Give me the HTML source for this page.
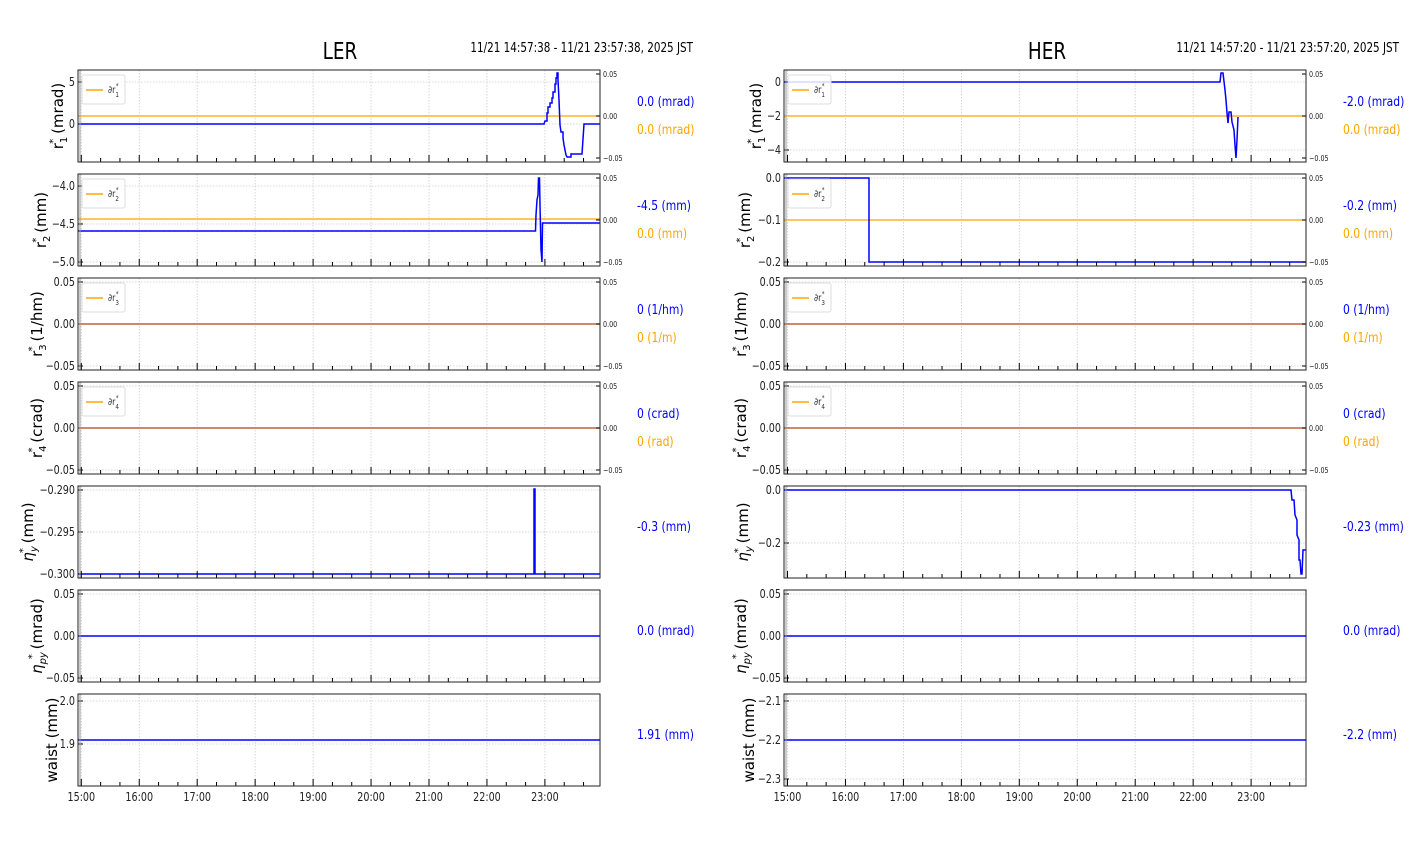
<!DOCTYPE html>
<html><head><meta charset="utf-8"><style>
html,body{margin:0;padding:0;background:#fff;width:1412px;height:864px;overflow:hidden}
svg{display:block}
text{font-family:"DejaVu Sans","Liberation Sans",sans-serif}
</style></head><body>
<svg id="s" width="1412" height="864" xmlns="http://www.w3.org/2000/svg"></svg>
<script>
const S=document.getElementById('s');let h='';
const T=[[70,162],[174,266],[278,370],[382,474],[486,578],[590,682],[694,786]];
const SX=0.8;
function line(x1,y1,x2,y2,c,w,extra){h+=`<line x1="${x1}" y1="${y1}" x2="${x2}" y2="${y2}" stroke="${c}" stroke-width="${w}" ${extra||''}/>`;}
function txt(x,y,s,sz,c,anchor,extra){h+=`<text transform="translate(${x},${y}) scale(${SX},1)" font-size="${sz}" fill="${c||'#000'}" text-anchor="${anchor||'start'}" ${extra||''}>${s}</text>`;}
function pl(pts,c,w){h+=`<polyline points="${pts}" fill="none" stroke="${c}" stroke-width="${w||1.5}" stroke-linejoin="miter"/>`;}
const sides=[
 {x0:78,x1:600,h0:81.3,vx:637,ylx:[57,40,36,36,27,36,51],title:'LER',tx:340,date:'11/21 14:57:38 - 11/21 23:57:38, 2025 JST',dx:693,
  yt:[[[82,'5'],[124,'0']],[[186,'−4.0'],[224,'−4.5'],[262,'−5.0']],[[282,'0.05'],[324,'0.00'],[366,'−0.05']],[[386,'0.05'],[428,'0.00'],[470,'−0.05']],[[490,'−0.290'],[532,'−0.295'],[574,'−0.300']],[[594,'0.05'],[636,'0.00'],[678,'−0.05']],[[701,'2.0'],[744,'1.9']]],
  vals:[['0.0 (mrad)','0.0 (mrad)'],['-4.5 (mm)','0.0 (mm)'],['0 (1/hm)','0 (1/m)'],['0 (crad)','0 (rad)'],['-0.3 (mm)'],['0.0 (mrad)'],['1.91 (mm)']],
  orange:[116,219,324,428],
  blue:['78,124 544,124 545,121 547,121 547,113 548,113 548,107 550,107 550,103 552,103 552,98 553,98 553,92 555,92 555,84 556,84 556,78 557,78 557,73 558,73 558,80 559,100 560,125 561,132 563,132 563,138 564,145 565,150 566,155 567,157 571,157 571,154 582,154 584,124 600,124',
   '78,231 535.5,231 536,215 537,200 538,195 538.5,178 539.5,178 540,205 541,250 542,262 542.5,223 600,223',
   '78,324 600,324','78,428 600,428','78,574 534,574 534,489 535,489 535,574 600,574','78,636 600,636','78,740 600,740']},
 {x0:784,x1:1306,h0:787.5,vx:1343,ylx:[755,744,740,740,742,740,748],title:'HER',tx:1047,date:'11/21 14:57:20 - 11/21 23:57:20, 2025 JST',dx:1399,
  yt:[[[82,'0'],[116,'−2'],[150,'−4']],[[178,'0.0'],[220,'−0.1'],[262,'−0.2']],[[282,'0.05'],[324,'0.00'],[366,'−0.05']],[[386,'0.05'],[428,'0.00'],[470,'−0.05']],[[490,'0.0'],[543,'−0.2']],[[594,'0.05'],[636,'0.00'],[678,'−0.05']],[[701,'−2.1'],[740,'−2.2'],[779,'−2.3']]],
  vals:[['-2.0 (mrad)','0.0 (mrad)'],['-0.2 (mm)','0.0 (mm)'],['0 (1/hm)','0 (1/m)'],['0 (crad)','0 (rad)'],['-0.23 (mm)'],['0.0 (mrad)'],['-2.2 (mm)']],
  orange:[116,220,324,428],
  blue:['784,82 1220,82 1221,73 1223,73 1225,90 1226,100 1227,113 1228,123 1229,112 1231,112 1232,122 1234,130 1235,145 1236,158 1237,140 1238,117',
   '784,178 869,178 869,262 1306,262','784,324 1306,324','784,428 1306,428',
   '784,490 1291,490 1292,500 1294,500 1295,515 1297,520 1297,535 1299,540 1299,560 1300,560 1301,574 1302,574 1303,550 1306,550','784,636 1306,636','784,740 1306,740']}
];
const ylabs=[['r','1','(mrad)'],['r','2','(mm)'],['r','3','(1/hm)'],['r','4','(crad)'],['η','y','(mm)'],['η','py','(mrad)'],null];
sides.forEach(sd=>{
 txt(sd.tx,59,sd.title,23,'#000','middle');
 txt(sd.dx,52,sd.date,13,'#000','end');
 T.forEach((t,i)=>{
  const [y0,y1]=t;
  for(let k=0;k<9;k++){const x=sd.h0+k*57.95;line(x,y0,x,y1,'#ccc',0.8,'stroke-dasharray="1.5,1.5"');}
  sd.yt[i].forEach(([y,l])=>{line(sd.x0,y,sd.x1,y,'#ccc',0.8,'stroke-dasharray="1.5,1.5"');line(sd.x0,y,sd.x0+5,y,'#000',1);txt(sd.x0-3,y+4,l,12,'#222','end');});
  if(i<4) pl(`${sd.x0},${sd.orange[i]} ${sd.x1},${sd.orange[i]}`,'#ffa500',1.3);
  pl(sd.blue[i],i>=2&&i<4?'#b0503a':'#0000ff',i>=2&&i<4?1.3:1.5);
  if(i<4){
   [[t[0]+4,'0.05'],[(t[0]+t[1])/2,'0.00'],[t[1]-4,'−0.05']].forEach(([y,l])=>{line(sd.x1-4,y,sd.x1,y,'#000',1);txt(sd.x1+3,y+3,l,8,'#222');});
   h+=`<rect x="${sd.x0+4}" y="${y0+5}" width="43" height="29" rx="2" fill="#fff" fill-opacity="0.85" stroke="#ddd" stroke-width="1"/>`;
   line(sd.x0+8,y0+20,sd.x0+25,y0+20,'#ffa500',1.5);
   h+=`<text transform="translate(${sd.x0+30},${y0+23}) scale(${SX},1)" font-size="10" fill="#333">∂r<tspan font-size="7" dy="4">${i+1}</tspan><tspan font-size="7" dy="-9" dx="-4">*</tspan></text>`;
   txt(sd.vx,y0+36,sd.vals[i][0],13.5,'#0000ff');
   txt(sd.vx,y0+64,sd.vals[i][1],13.5,'#ffa500');
  } else txt(sd.vx,y0+45,sd.vals[i][0],13.5,'#0000ff');
  for(let k=0;k<27;k++){const x=sd.h0+k*57.95/3;if(x>sd.x1-1)break;line(x,y1,x,y1-(k%3==0?7:4),'#000',1);}
  line(sd.x0+2,y0,sd.x0+2,y1,'#999',1);
  h+=`<rect x="${sd.x0}" y="${y0}" width="${sd.x1-sd.x0}" height="${y1-y0}" fill="none" stroke="#222" stroke-width="1"/>`;
  const cy=(y0+y1)/2, lx=sd.ylx[i]+6;
  const yl=ylabs[i];
  if(yl){const it=yl[0]=='η'?'font-style="italic"':'';
   h+=`<text transform="translate(${lx},${cy}) rotate(-90)" font-size="15" fill="#000" text-anchor="middle"><tspan ${it}>${yl[0]}</tspan><tspan font-size="10" dy="4" ${it}>${yl[1]}</tspan><tspan font-size="10" dy="-11" dx="-7">*</tspan><tspan dy="7"> ${yl[2]}</tspan></text>`;}
  else h+=`<text transform="translate(${lx},${cy}) rotate(-90)" font-size="15" fill="#000" text-anchor="middle">waist (mm)</text>`;
 });
 for(let k=0;k<9;k++)txt(sd.h0+k*57.95,801,(15+k)+':00',12,'#222','middle');
});
S.innerHTML=h;
</script>
</body></html>
